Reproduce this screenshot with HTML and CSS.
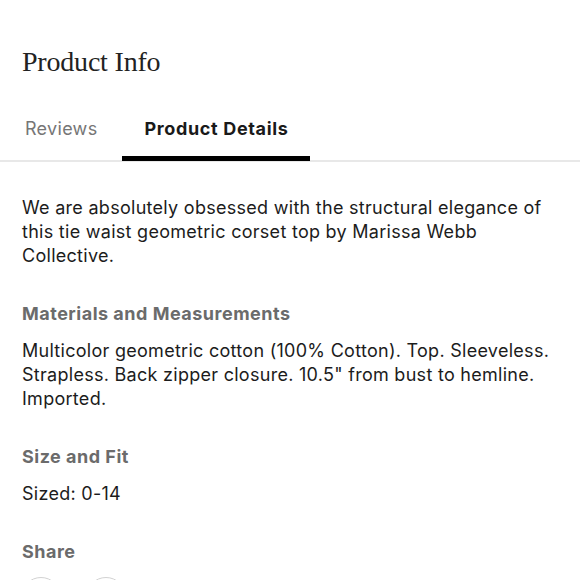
FILE: index.html
```html
<!DOCTYPE html>
<html lang="en">
<head>
<meta charset="utf-8">
<title>Product Info</title>
<link rel="stylesheet" href="styles.css">
</head>
<body>
<div class="page">
  <h1 class="title">Product Info</h1>
  <nav class="tabs">
    <span class="tab">Reviews</span>
    <span class="tab tab-active">Product Details</span>
  </nav>
  <main class="content">
    <p class="text">We are absolutely obsessed with the structural elegance of this tie waist geometric corset top by Marissa Webb Collective.</p>
    <section class="section">
      <h3 class="section-title">Materials and Measurements</h3>
      <p class="text">Multicolor geometric cotton (100% Cotton). Top. Sleeveless. Strapless. Back zipper closure. 10.5" from bust to hemline. Imported.</p>
    </section>
    <section class="section">
      <h3 class="section-title">Size and Fit</h3>
      <p class="text">Sized: 0-14</p>
    </section>
    <section class="section">
      <h3 class="section-title">Share</h3>
      <div class="share">
        <span class="share-btn"></span>
        <span class="share-btn"></span>
      </div>
    </section>
  </main>
</div>
</body>
</html>
```

FILE: styles.css
```css
html, body {
  margin: 0;
  padding: 0;
  background: #ffffff;
}

body {
  font-family: Inter, "Liberation Sans", Arial, sans-serif;
  color: #1c1c1c;
  overflow: hidden;
  height: 580px;
}

.page {
  padding-top: 45px;
}

.title {
  margin: 0 0 0 22px;
  font-family: "Liberation Serif", "Times New Roman", serif;
  font-weight: normal;
  font-size: 28px;
  line-height: 34px;
  color: #222222;
  letter-spacing: -0.2px;
}

.tabs {
  display: flex;
  gap: 3px;
  margin-top: 38px;
  padding-left: 3px;
  border-bottom: 2px solid #e8e8e8;
}

.tab {
  padding: 0 22px 15px;
  font-size: 18px;
  line-height: 24px;
  color: #767676;
  letter-spacing: 0.3px;
  border-bottom: 5px solid transparent;
  margin-bottom: -1px;
}

.tab-active {
  font-weight: bold;
  color: #1a1a1a;
  letter-spacing: 0.65px;
  border-bottom-color: #000000;
}

.content {
  padding: 34px 22px 0;
}

.text {
  margin: 0;
  font-size: 18px;
  line-height: 24px;
  letter-spacing: 0.28px;
  color: #1c1c1c;
}

.section {
  margin-top: 34px;
}

.section-title {
  margin: 0 0 13px;
  font-size: 18px;
  line-height: 24px;
  font-weight: bold;
  letter-spacing: 0.5px;
  color: #6b6b6b;
}

.share {
  display: flex;
  gap: 25px;
  margin-left: -1px;
}

.share-btn {
  width: 40px;
  height: 40px;
  border-radius: 50%;
  border: 1px solid #d2d2d2;
  box-sizing: border-box;
}
```
